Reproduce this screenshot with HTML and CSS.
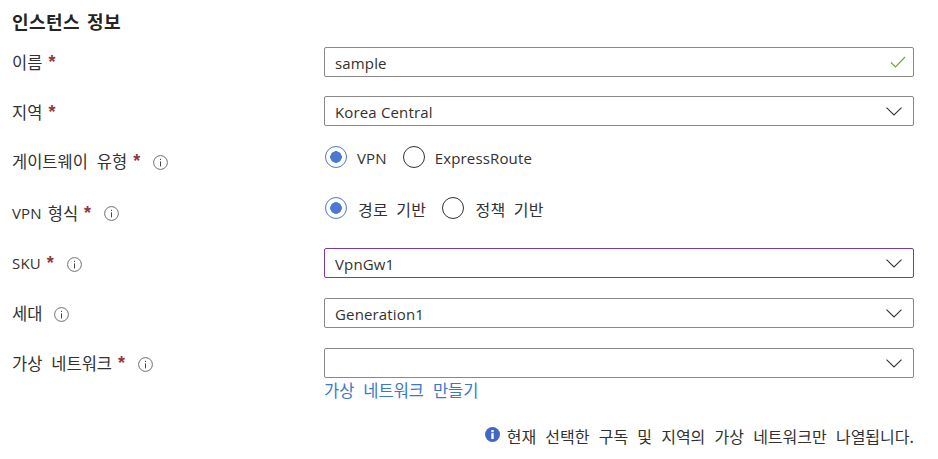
FILE: index.html
```html
<!DOCTYPE html>
<html lang="ko">
<head>
<meta charset="utf-8">
<title>인스턴스 정보</title>
<link rel="stylesheet" href="styles.css">
</head>
<body>
<svg class="defs" width="0" height="0" aria-hidden="true">
  <symbol id="info" viewBox="0 0 15 15">
    <circle cx="7.5" cy="7.5" r="6.9" fill="none" stroke="#6e6e6e" stroke-width="1"/>
    <rect x="7" y="6.4" width="1" height="5" fill="#444"/>
    <rect x="7" y="3.8" width="1" height="1.2" fill="#444"/>
  </symbol>
  <symbol id="chev" viewBox="0 0 16 9">
    <path d="M0.5 0.6 L8 8 L15.5 0.6" fill="none" stroke="#333" stroke-width="1.1"/>
  </symbol>
</svg>
<main class="page">
  <h2 class="title">인스턴스 정보</h2>
  <div class="form">
    <div class="row row-name">
      <div class="label"><span class="ko">이름</span><span class="req">*</span></div>
      <div class="field"><span class="val">sample</span>
        <svg class="check" viewBox="0 0 16 12" width="16" height="12"><path d="M1 6.5 L5.5 11 L15 1" fill="none" stroke="#6ea73c" stroke-width="1.2"/></svg>
      </div>
    </div>
    <div class="row row-region">
      <div class="label label-low"><span class="ko">지역</span><span class="req">*</span></div>
      <div class="field"><span class="val">Korea Central</span><svg class="chev"><use href="#chev"/></svg></div>
    </div>
    <div class="row row-type">
      <div class="label label-radio"><span class="ko">게이트웨이 유형</span><span class="req">*</span><svg class="info i-a"><use href="#info"/></svg></div>
      <div class="radios">
        <span class="radio on"></span><span class="opt opt-first">VPN</span>
        <span class="radio"></span><span class="opt">ExpressRoute</span>
      </div>
    </div>
    <div class="row row-vpn">
      <div class="label label-radio label-vpn"><span class="pre">VPN</span><span class="ko">형식</span><span class="req">*</span><svg class="info i-a"><use href="#info"/></svg></div>
      <div class="radios">
        <span class="radio on"></span><span class="opt opt-first ko ko-opt">경로 기반</span>
        <span class="radio"></span><span class="opt ko ko-opt">정책 기반</span>
      </div>
    </div>
    <div class="row row-sku">
      <div class="label label-sel"><span>SKU</span><span class="req">*</span><svg class="info i-a"><use href="#info"/></svg></div>
      <div class="field focus"><span class="val">VpnGw1</span><svg class="chev"><use href="#chev"/></svg></div>
    </div>
    <div class="row row-gen">
      <div class="label label-sel"><span class="ko">세대</span><svg class="info i-b"><use href="#info"/></svg></div>
      <div class="field"><span class="val">Generation1</span><svg class="chev"><use href="#chev"/></svg></div>
    </div>
    <div class="row row-net">
      <div class="label label-sel"><span class="ko">가상 네트워크</span><span class="req">*</span><svg class="info i-a"><use href="#info"/></svg></div>
      <div>
        <div class="field"><span class="val"></span><svg class="chev"><use href="#chev"/></svg></div>
        <a class="link ko" href="#">가상 네트워크 만들기</a>
      </div>
    </div>
  </div>
  <p class="note">
    <svg class="note-icon" viewBox="0 0 15 15" width="15" height="15"><circle cx="7.5" cy="7.5" r="7.5" fill="#4267c8"/><rect x="6.3" y="6.2" width="2.4" height="5.8" fill="#fff"/><rect x="6.3" y="3" width="2.4" height="2.2" fill="#fff"/></svg>
    <span class="note-text">현재 선택한 구독 및 지역의 가상 네트워크만 나열됩니다.</span>
  </p>
</main>
</body>
</html>
```
FILE: styles.css
```css
* { box-sizing: border-box; }
html, body { margin: 0; padding: 0; background: #fff; }
body {
  font-family: "Open Sans", "Noto Sans CJK KR", sans-serif;
  font-size: 15px;
  letter-spacing: 0.15px;
  color: #323130;
  overflow: hidden;
}
.defs { position: absolute; }
.page { width: 938px; height: 459px; padding: 0 24px 0 12px; }
.title {
  margin: 0;
  height: 47px;
  padding-top: 9px;
  font-size: 18px;
  font-weight: 700;
  line-height: 26px;
  letter-spacing: 0.4px;
  word-spacing: 2px;
  color: #252423;
}
.ko {
  font-family: "Noto Sans CJK KR", sans-serif;
  font-size: 16.5px;
  letter-spacing: 0;
  word-spacing: 4.3px;
}
.ko-opt { font-size: 16px; letter-spacing: 0.3px; word-spacing: 3.5px; margin-left: 1px; }
.form { display: flex; flex-direction: column; }
.row { display: grid; grid-template-columns: 312px 590px; }
.row-name { height: 49px; }
.row-region { height: 47px; }
.row-type { height: 51px; }
.row-vpn { height: 54px; }
.row-sku, .row-gen { height: 50px; }
.row-net { height: 78px; }
.label { line-height: 30px; white-space: nowrap; display: flex; align-items: center; height: 30px; }
.label-low { padding-top: 1px; }
.label-radio { margin-top: 3px; }
.label-vpn { padding-top: 1px; }
.pre { margin-right: 6px; }
.req {
  margin-left: 6px;
  color: #8f3a3a;
  font-weight: 700;
  font-size: 18px;
  font-family: "Liberation Sans", sans-serif;
}
.info { width: 15px; height: 15px; flex: none; margin-top: 2px; }
.i-a { margin-left: 13px; }
.i-b { margin-left: 12px; }
.field {
  height: 30px;
  border: 1px solid #8a8886;
  border-radius: 2px;
  padding: 0 11px 0 10px;
  display: flex;
  align-items: center;
  justify-content: space-between;
  line-height: 28px;
}
.val { padding-top: 1px; }
.focus { border-color: #7a3aa8; }
.check { flex: none; margin-right: -4px; }
.chev { width: 16px; height: 9px; flex: none; }
.radios { display: flex; align-items: center; height: 28px; padding-left: 1px; }
.radio {
  width: 22px;
  height: 22px;
  flex: none;
  border: 1px solid #323130;
  border-radius: 50%;
  margin-right: 10px;
  background: #fff;
}
.radio.on {
  border-color: #4a78d4;
  background: radial-gradient(circle, #4a78d4 0 5.5px, #fff 6px);
}
.opt { line-height: 22px; white-space: nowrap; padding-top: 1px; }
.opt-first { margin-right: 16px; }
.link { display: block; margin-top: 2px; line-height: 20px; color: #3a78c9; text-decoration: none; }
.note {
  margin: 0;
  display: flex;
  justify-content: flex-end;
  align-items: center;
  gap: 7px;
  height: 20px;
  line-height: 20px;
}
.note-text {
  font-family: "Noto Sans CJK KR", sans-serif;
  font-size: 16px;
  letter-spacing: 0;
  word-spacing: 4.7px;
}
.note-icon { flex: none; margin-top: -3px; }
```
